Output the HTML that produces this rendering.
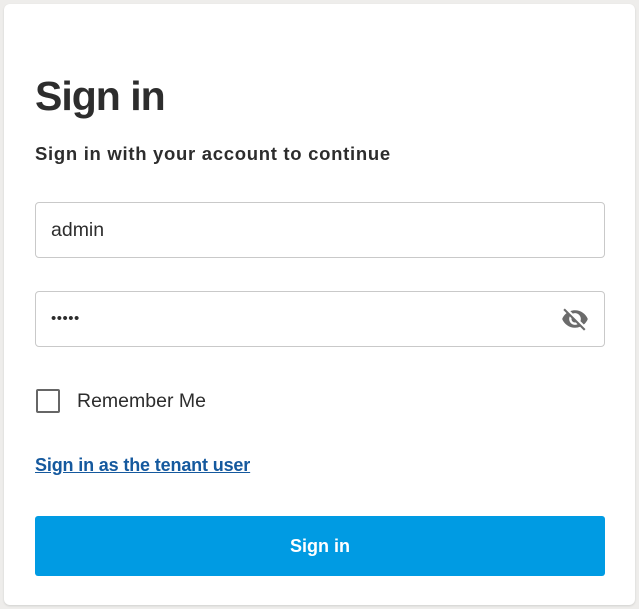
<!DOCTYPE html>
<html><head><meta charset="utf-8"><style>
html,body{margin:0;padding:0;width:639px;height:609px;background:#eeedeb;overflow:hidden;font-family:"Liberation Sans",Arial,sans-serif;color:#2d2d2d}
.card{position:absolute;left:4px;top:4px;width:631px;height:601px;background:#fff;border-radius:6px;box-shadow:0 1px 2px rgba(0,0,0,.12)}
.abs{position:absolute}
h1{position:absolute;left:35px;top:70px;margin:0;font-size:41px;font-weight:bold;letter-spacing:-1px;line-height:52px}
.sub{left:35px;top:142px;font-size:18.5px;font-weight:bold;letter-spacing:0.7px;line-height:24px;white-space:nowrap}
.inp{left:35px;width:568px;height:54px;border:1px solid #c9c9c9;border-radius:4px}
.cb{left:36px;top:389px;width:20px;height:20px;border:2px solid #666;border-radius:2px}
</style></head><body>
<div class="card"></div>
<h1>Sign in</h1>
<div class="abs sub">Sign in with your account to continue</div>
<div class="abs inp" style="top:202px"></div>
<div class="abs" style="left:51px;top:218px;font-size:19.5px;line-height:24px">admin</div>
<div class="abs inp" style="top:291px"></div>
<div class="abs" style="left:51px;top:307px;font-size:15px;line-height:24px;letter-spacing:0.5px">•••••</div>
<svg class="abs" style="left:560px;top:305px" width="30" height="28" viewBox="0 0 24 24"><path fill="#6b6b6b" d="M12 7c2.76 0 5 2.24 5 5 0 .65-.13 1.26-.36 1.830l2.92 2.92c1.51-1.26 2.7-2.89 3.43-4.75-1.73-4.39-6-7.5-11-7.5-1.4 0-2.74.25-3.980.7l2.16 2.16C10.74 7.13 11.35 7 12 7zM2 4.27l2.28 2.28.46.46C3.08 8.3 1.78 10.02 1 12c1.73 4.39 6 7.5 11 7.5 1.55 0 3.03-.3 4.38-.84l.42.42L19.73 22 21 20.73 3.27 3 2 4.27zM7.53 9.8l1.55 1.55c-.05.21-.08.43-.08.65 0 1.660 1.34 3 3 3 .22 0 .44-.03.65-.08l1.55 1.55c-.67.33-1.41.53-2.2.53-2.76 0-5-2.24-5-5 0-.79.2-1.53.53-2.2z"/></svg>
<div class="abs cb"></div>
<div class="abs" style="left:77px;top:389px;font-size:19.5px;line-height:24px">Remember Me</div>
<div class="abs" style="left:35px;top:454px;font-size:18px;font-weight:bold;color:#15599e;text-decoration:underline;letter-spacing:-0.15px;line-height:22px;white-space:nowrap">Sign in as the tenant user</div>
<div class="abs" style="left:35px;top:516px;width:570px;height:60px;background:#009be3;border-radius:3px;color:#fff;font-weight:bold;font-size:18px;text-align:center;line-height:60px">Sign in</div>
</body></html>
